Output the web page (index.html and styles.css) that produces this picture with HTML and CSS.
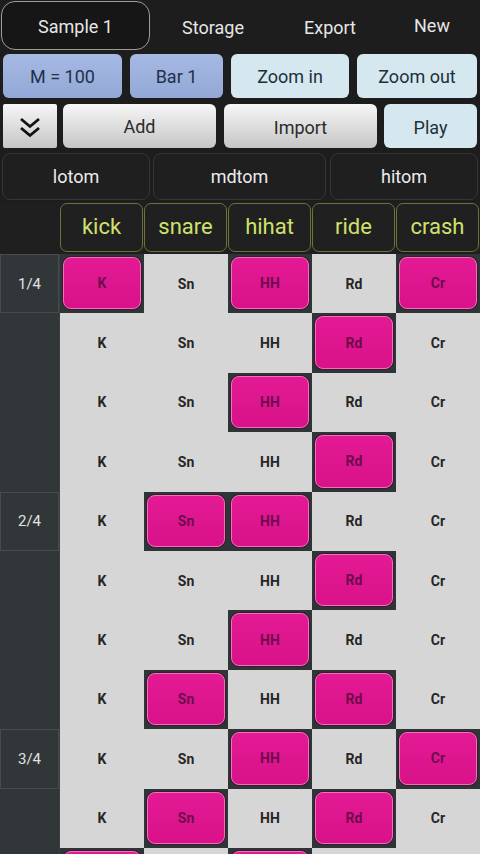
FILE: index.html
```html
<!DOCTYPE html>
<html>
<head>
<meta charset="utf-8">
<link rel="stylesheet" href="styles.css">
</head>
<body>
<div class="app">
  <div class="tabs">
    <div class="tab sel">Sample 1</div>
    <div class="tab storage">Storage</div>
    <div class="tab export">Export</div>
    <div class="tab new">New</div>
  </div>
  <div class="toolbar">
    <div class="btn blue w1">M = 100</div>
    <div class="btn blue w2">Bar 1</div>
    <div class="btn light w3">Zoom in</div>
    <div class="btn light w4">Zoom out</div>
  </div>
  <div class="actions">
    <div class="btn grey chev">
      <svg width="28" height="24" viewBox="0 0 28 24"><path d="M5 3 L14 10.5 L23 3 M5 12 L14 19.5 L23 12" fill="none" stroke="#111" stroke-width="2.8" stroke-linejoin="miter"/></svg>
    </div>
    <div class="btn grey add">Add</div>
    <div class="btn grey import">Import</div>
    <div class="btn light play">Play</div>
  </div>
  <div class="toms">
    <div class="tom t1">lotom</div>
    <div class="tom t2">mdtom</div>
    <div class="tom t3">hitom</div>
  </div>
  <div class="header">
    <div class="corner"></div>
    <div class="hcell"><span>kick</span></div>
    <div class="hcell"><span>snare</span></div>
    <div class="hcell"><span>hihat</span></div>
    <div class="hcell"><span>ride</span></div>
    <div class="hcell"><span>crash</span></div>
  </div>
  <div class="grid">
    <div class="row">
      <div class="lab"><div class="beat">1/4</div></div>
      <div class="cell on"><div class="pad">K</div></div>
      <div class="cell">Sn</div>
      <div class="cell on"><div class="pad">HH</div></div>
      <div class="cell">Rd</div>
      <div class="cell on"><div class="pad">Cr</div></div>
    </div>
    <div class="row">
      <div class="lab"></div>
      <div class="cell">K</div>
      <div class="cell">Sn</div>
      <div class="cell">HH</div>
      <div class="cell on"><div class="pad">Rd</div></div>
      <div class="cell">Cr</div>
    </div>
    <div class="row">
      <div class="lab"></div>
      <div class="cell">K</div>
      <div class="cell">Sn</div>
      <div class="cell on"><div class="pad">HH</div></div>
      <div class="cell">Rd</div>
      <div class="cell">Cr</div>
    </div>
    <div class="row">
      <div class="lab"></div>
      <div class="cell">K</div>
      <div class="cell">Sn</div>
      <div class="cell">HH</div>
      <div class="cell on"><div class="pad">Rd</div></div>
      <div class="cell">Cr</div>
    </div>
    <div class="row">
      <div class="lab"><div class="beat">2/4</div></div>
      <div class="cell">K</div>
      <div class="cell on"><div class="pad">Sn</div></div>
      <div class="cell on"><div class="pad">HH</div></div>
      <div class="cell">Rd</div>
      <div class="cell">Cr</div>
    </div>
    <div class="row">
      <div class="lab"></div>
      <div class="cell">K</div>
      <div class="cell">Sn</div>
      <div class="cell">HH</div>
      <div class="cell on"><div class="pad">Rd</div></div>
      <div class="cell">Cr</div>
    </div>
    <div class="row">
      <div class="lab"></div>
      <div class="cell">K</div>
      <div class="cell">Sn</div>
      <div class="cell on"><div class="pad">HH</div></div>
      <div class="cell">Rd</div>
      <div class="cell">Cr</div>
    </div>
    <div class="row">
      <div class="lab"></div>
      <div class="cell">K</div>
      <div class="cell on"><div class="pad">Sn</div></div>
      <div class="cell">HH</div>
      <div class="cell on"><div class="pad">Rd</div></div>
      <div class="cell">Cr</div>
    </div>
    <div class="row">
      <div class="lab"><div class="beat">3/4</div></div>
      <div class="cell">K</div>
      <div class="cell">Sn</div>
      <div class="cell on"><div class="pad">HH</div></div>
      <div class="cell">Rd</div>
      <div class="cell on"><div class="pad">Cr</div></div>
    </div>
    <div class="row">
      <div class="lab"></div>
      <div class="cell">K</div>
      <div class="cell on"><div class="pad">Sn</div></div>
      <div class="cell">HH</div>
      <div class="cell on"><div class="pad">Rd</div></div>
      <div class="cell">Cr</div>
    </div>
    <div class="row">
      <div class="lab"></div>
      <div class="cell on"><div class="pad">K</div></div>
      <div class="cell">Sn</div>
      <div class="cell on"><div class="pad">HH</div></div>
      <div class="cell">Rd</div>
      <div class="cell">Cr</div>
    </div>
  </div>
</div>
</body>
</html>
```
FILE: styles.css
```css
html, body {
  margin: 0;
  padding: 0;
  background: #1d1d1d;
}
.app {
  width: 480px;
  height: 854px;
  overflow: hidden;
  font-family: Roboto, "Noto Sans", sans-serif;
  background: #1d1d1d;
}
.tabs {
  display: flex;
  height: 52px;
  align-items: stretch;
}
.tab {
  display: flex;
  align-items: center;
  justify-content: center;
  color: #e6e6e6;
  font-size: 18px;
  padding-top: 2px;
  box-sizing: border-box;
}
.tab.sel {
  width: 149px;
  margin: 1px 0 2px 1px;
  border: 1.5px solid #9c9c9c;
  border-radius: 14px;
  background: #161616;
}
.tab.storage { width: 126px; }
.tab.export { width: 108px; }
.tab.new { width: 96px; padding-top: 0; padding-bottom: 2px; }

.toolbar {
  display: flex;
  height: 44px;
  padding: 2px 3px 0 3px;
  gap: 8px;
}
.btn {
  display: flex;
  align-items: center;
  justify-content: center;
  border-radius: 6px;
  font-size: 18px;
  box-sizing: border-box;
}
.blue {
  background: linear-gradient(#a6b9e3, #93a8d6);
  color: #22304a;
}
.light {
  background: #d5e7ef;
  color: #22303a;
}
.grey {
  background: linear-gradient(#f6f6f6, #c6c6c6);
  color: #2a2a2a;
}
.w1 { width: 119px; }
.w2 { width: 93px; }
.w3 { width: 118px; }
.w4 { width: 120px; }

.actions {
  display: flex;
  height: 44px;
  padding: 6px 3px 0 3px;
}
.chev { width: 54px; border-radius: 2px; padding-top: 4px; }
.add { width: 153px; margin-left: 6px; }
.import { width: 153px; margin-left: 8px; padding-top: 2px; }
.play { width: 93px; margin-left: 7px; padding-top: 3px; }

.toms {
  display: flex;
  height: 47px;
  padding: 5px 2px 0 2px;
}
.tom {
  display: flex;
  align-items: center;
  justify-content: center;
  background: #1f1f1f;
  border: 1.5px solid #363636;
  border-radius: 8px;
  color: #ececec;
  font-size: 18px;
  box-sizing: border-box;
}
.t1 { width: 148px; }
.t2 { width: 173px; margin-left: 3px; }
.t3 { width: 148px; margin-left: 4px; }

.header {
  display: flex;
  height: 52px;
  margin-top: 2px;
  background: #1f1f1f;
}
.corner { width: 60px; }
.hcell {
  width: 84px;
  padding: 1px 1px 2px 0;
  box-sizing: border-box;
}
.hcell span {
  display: flex;
  height: 100%;
  align-items: center;
  justify-content: center;
  border: 1.5px solid #6c7238;
  border-radius: 7px;
  background: #202020;
  color: #d0e06c;
  font-size: 22px;
  box-sizing: border-box;
  padding-bottom: 2px;
}

.grid {
  background: #2f3537;
}
.row {
  display: flex;
  height: 59.4px;
}
.lab {
  width: 60px;
  background: #313739;
  box-sizing: border-box;
  border-right: 1px solid #3a4042;
}
.beat {
  height: 100%;
  box-sizing: border-box;
  border: 1px solid #464c4e;
  display: flex;
  align-items: center;
  justify-content: center;
  color: #e2e2e2;
  font-size: 15px;
}
.cell {
  width: 84px;
  background: #d6d6d6;
  display: flex;
  align-items: center;
  justify-content: center;
  color: #262626;
  font-weight: bold;
  font-size: 14px;
}
.cell.on {
  background: #2f3436;
  padding: 3px 3px 4px 3px;
  box-sizing: border-box;
  align-items: stretch;
}
.pad {
  flex: 1;
  display: flex;
  align-items: center;
  justify-content: center;
  border-radius: 8px;
  background: linear-gradient(#e31a93, #d9128a);
  border: 1px solid #f26fbd;
  box-shadow: 0 0 0 1px #3a1a30;
  color: #6e0b4e;
}
```
